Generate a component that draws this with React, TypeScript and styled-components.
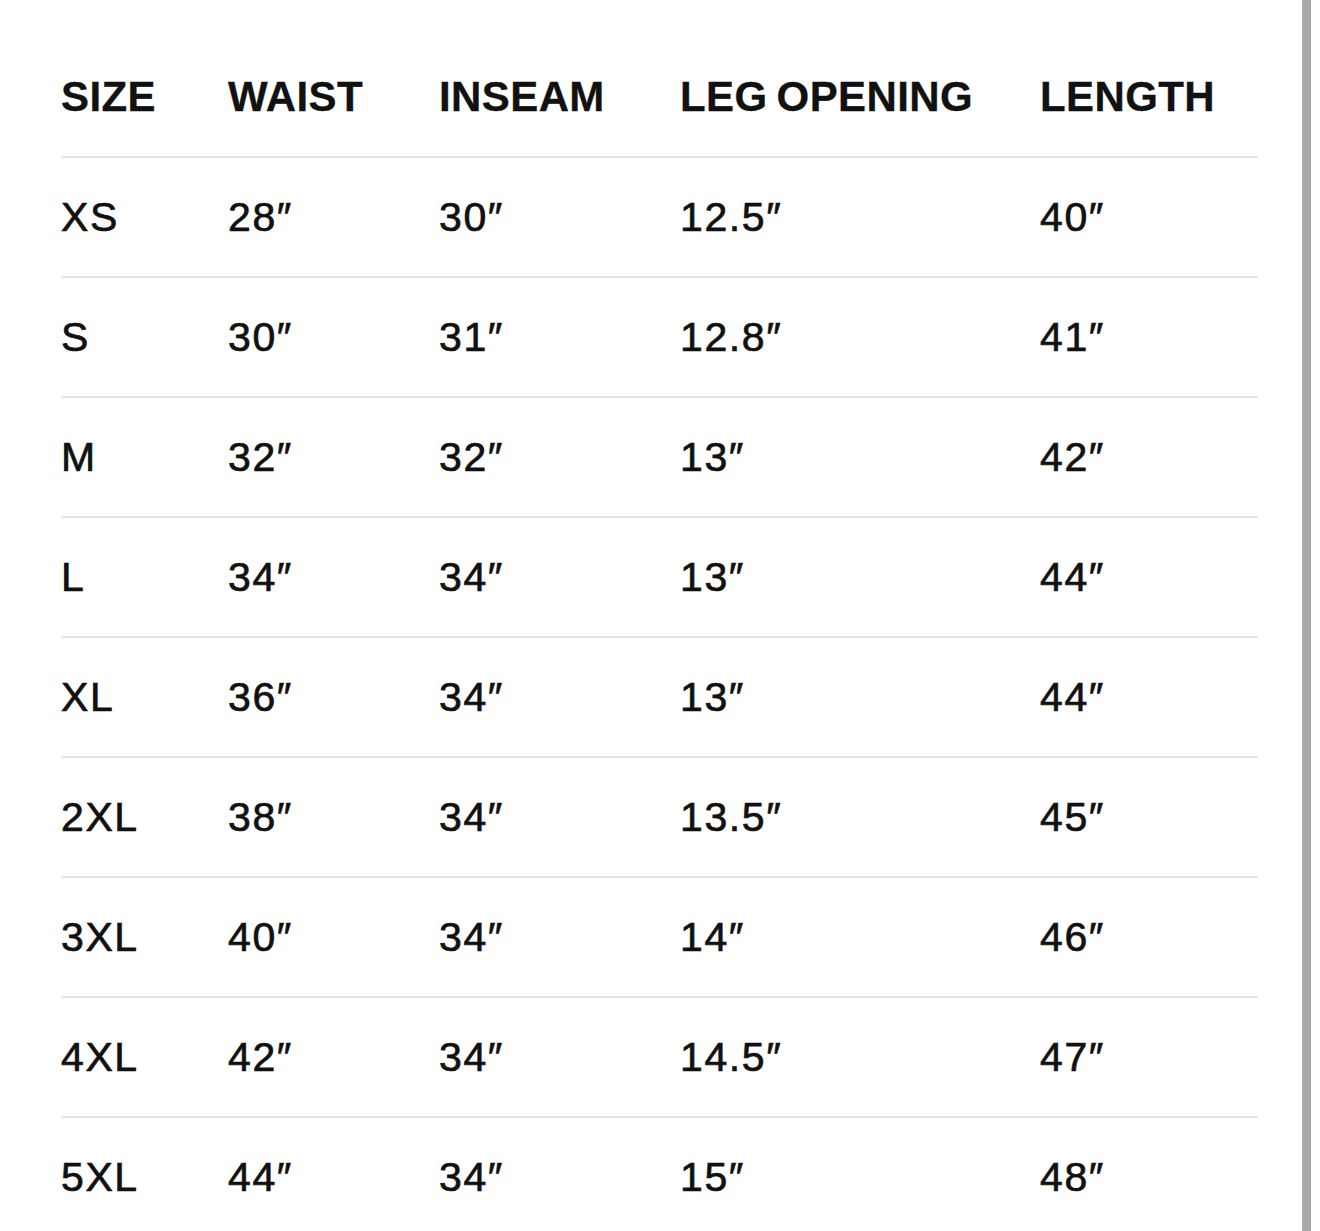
import React from 'react'
import styled, { createGlobalStyle } from 'styled-components'

const GlobalStyle = createGlobalStyle`
  html, body {
    margin: 0;
    padding: 0;
    background: #fff;
  }
  body {
    font-family: 'Liberation Sans', Arial, sans-serif;
    color: #111;
  }
`

const columns = ['SIZE', 'WAIST', 'INSEAM', 'LEG OPENING', 'LENGTH']
const widths = [167, 211, 241, 360, 218]

const rows: string[][] = [
  ['XS', '28″', '30″', '12.5″', '40″'],
  ['S', '30″', '31″', '12.8″', '41″'],
  ['M', '32″', '32″', '13″', '42″'],
  ['L', '34″', '34″', '13″', '44″'],
  ['XL', '36″', '34″', '13″', '44″'],
  ['2XL', '38″', '34″', '13.5″', '45″'],
  ['3XL', '40″', '34″', '14″', '46″'],
  ['4XL', '42″', '34″', '14.5″', '47″'],
  ['5XL', '44″', '34″', '15″', '48″'],
]

export default function App() {
  return (
    <>
      <GlobalStyle />
      <Page>
        <Content>
          <SizeTable>
            <colgroup>
              {widths.map((w, i) => (
                <col key={i} style={{ width: w }} />
              ))}
            </colgroup>
            <thead>
              <tr>
                {columns.map((c) => (
                  <HeadCell key={c}>{c}</HeadCell>
                ))}
              </tr>
            </thead>
            <tbody>
              {rows.map((r) => (
                <Row key={r[0]}>
                  {r.map((v, i) => (
                    <Cell key={i}>{v}</Cell>
                  ))}
                </Row>
              ))}
            </tbody>
          </SizeTable>
        </Content>
        <Rail />
      </Page>
    </>
  )
}

const Page = styled.div`
  display: flex;
  height: 1231px;
  overflow: hidden;
`

const Content = styled.div`
  flex: 1;
  padding: 37px 0 0 61px;
`

const Rail = styled.div`
  width: 9px;
  margin-right: 9px;
  background: #a9a9a9;
`

const SizeTable = styled.table`
  border-collapse: collapse;
  table-layout: fixed;
  width: 1197px;
`

const HeadCell = styled.th`
  height: 119px;
  padding: 0;
  text-align: left;
  vertical-align: middle;
  font-size: 42px;
  font-weight: 700;
  letter-spacing: 0.4px;
  word-spacing: -3px;
  border-bottom: 2px solid #e4e4e4;
  -webkit-text-stroke: 0.3px #111;
`

const Row = styled.tr`
  td {
    border-bottom: 2px solid #e4e4e4;
  }
`

const Cell = styled.td`
  height: 118px;
  padding: 0;
  text-align: left;
  vertical-align: middle;
  font-size: 41px;
  font-weight: 400;
  letter-spacing: 1.6px;
  -webkit-text-stroke: 0.7px #111;
`
